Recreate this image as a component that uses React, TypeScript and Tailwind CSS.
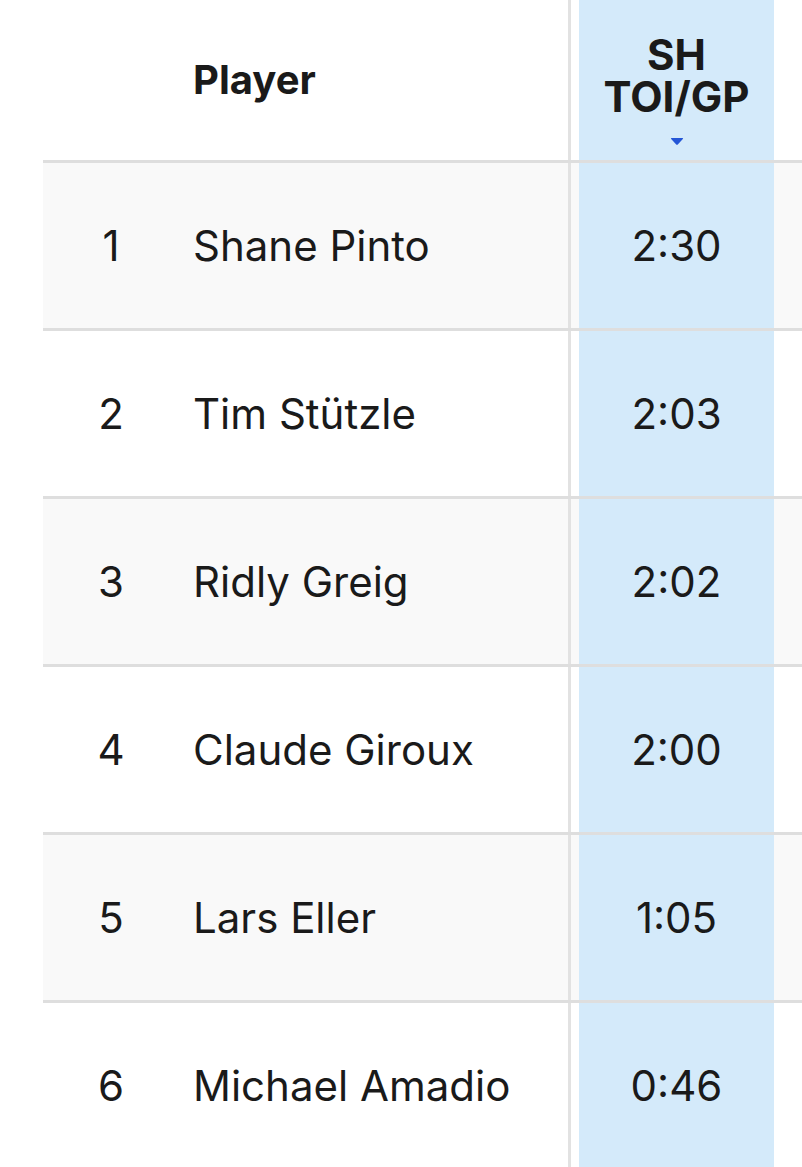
import React from 'react';

const players = [
    { rank: 1, name: 'Shane Pinto', toi: '2:30' },
    { rank: 2, name: 'Tim Stützle', toi: '2:03' },
    { rank: 3, name: 'Ridly Greig', toi: '2:02' },
    { rank: 4, name: 'Claude Giroux', toi: '2:00' },
    { rank: 5, name: 'Lars Eller', toi: '1:05' },
    { rank: 6, name: 'Michael Amadio', toi: '0:46' },
];

function SortArrow() {
    return (
        <svg width="14" height="9" viewBox="0 0 14 9" className="block">
            <path
                d="M1.5 1 H12.5 Q13.6 1 12.8 1.9 L7.8 7.4 Q7 8.2 6.2 7.4 L1.2 1.9 Q0.4 1 1.5 1 Z"
                fill="#2456d6"
            />
        </svg>
    );
}

function Row({ rank, name, toi, shaded }: { rank: number; name: string; toi: string; shaded: boolean }) {
    return (
        <div
            className={`flex h-[168px] border-b-[3px] border-[#dedede] ${shaded ? 'bg-[#f9f9f9]' : 'bg-white'}`}
        >
            <div className="w-[136px] shrink-0 flex items-center justify-center">{rank}</div>
            <div className="flex-1 flex items-center pl-[14px]">{name}</div>
            <div className="w-[3px] shrink-0 bg-[#e2e2e2]" />
            <div className="w-[8px] shrink-0" />
            <div className="w-[195px] shrink-0 bg-[#d4eafa] flex items-center justify-center">{toi}</div>
            <div className="w-[28px] shrink-0" />
        </div>
    );
}

export default function App() {
    return (
        <div
            className="w-[802px] h-[1167px] overflow-hidden bg-white text-[42px] text-[#1a1a1a]"
            style={{ fontFamily: "Inter, 'Liberation Sans', sans-serif" }}
        >
            <div className="ml-[43px]">
                {/* header */}
                <div className="flex h-[163px] border-b-[3px] border-[#dedede] bg-white">
                    <div className="w-[136px] shrink-0" />
                    <div className="flex-1 flex items-center pl-[14px] font-bold text-[40px]">Player</div>
                    <div className="w-[3px] shrink-0 bg-[#e2e2e2]" />
                    <div className="w-[8px] shrink-0" />
                    <div className="w-[195px] shrink-0 bg-[#d4eafa] flex flex-col items-center pt-[34px] font-bold leading-[42px] text-center">
                        <span>SH</span>
                        <span>TOI/GP</span>
                        <div className="mt-[19px]">
                            <SortArrow />
                        </div>
                    </div>
                    <div className="w-[28px] shrink-0" />
                </div>

                {players.map((p, i) => (
                    <Row key={p.rank} rank={p.rank} name={p.name} toi={p.toi} shaded={i % 2 === 0} />
                ))}
            </div>
        </div>
    );
}
